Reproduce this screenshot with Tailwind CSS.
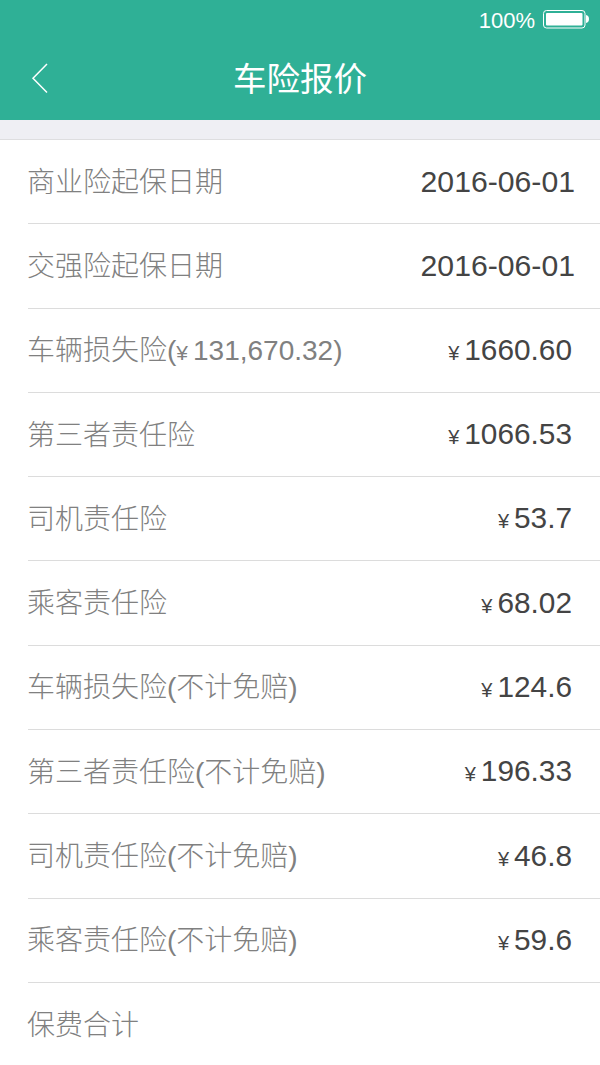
<!DOCTYPE html>
<html lang="zh-CN">
<head>
  <meta charset="UTF-8" />
  <title>车险报价</title>
  <script src="https://cdn.jsdelivr.net/npm/@tailwindcss/browser@4"></script>
</head>
<body class="w-[600px] h-[1065px] overflow-hidden bg-white font-['Liberation_Sans','Noto_Sans_CJK_SC',sans-serif]">
  <!-- Header -->
  <header class="h-[120px] bg-[#2fb096] text-white flex flex-col">
    <div class="h-10 flex items-center justify-end pr-[10px] gap-2">
      <span class="text-[22px]">100%</span>
      <svg width="47" height="20" viewBox="0 0 47 20">
        <rect x="0.500" y="0.500" width="41.500" height="17.500" rx="3" fill="none" stroke="#fff" stroke-width="1" />
        <rect x="3" y="3" width="36.500" height="12.500" rx="1" fill="#fff" />
        <path d="M43 5c2 .3 3 2 3 4s-1 3.700-3 4z" fill="#fff" />
      </svg>
    </div>
    <div class="relative flex-1 flex items-center justify-center pb-[6px]">
      <svg class="absolute left-[31px] top-[23px]" width="18" height="31" viewBox="0 0 18 31">
        <path d="M16 1 2 15.300l14 14.200" fill="none" stroke="#fff" stroke-width="1.500" />
      </svg>
      <h1 class="text-[33.500px] font-['Noto_Sans_CJK_SC',sans-serif]">车险报价</h1>
    </div>
  </header>
  <div class="h-5 bg-[#efeff4] border-b border-[#dedee0]"></div>

  <!-- Rows -->
  <ul class="pl-7 text-[28px] text-[#808080]">
    <li class="h-[84.300px] flex items-center justify-between pr-[25px] border-b border-[#dcdcdc]">
      <span class="font-light -ml-px pt-[2px]">商业险起保日期</span><span class="text-[30.200px] text-[#444]">2016-06-01</span>
    </li>
    <li class="h-[84.300px] flex items-center justify-between pr-[25px] border-b border-[#dcdcdc]">
      <span class="font-light -ml-px pt-[2px]">交强险起保日期</span><span class="text-[30.200px] text-[#444]">2016-06-01</span>
    </li>
    <li class="h-[84.300px] flex items-center justify-between pr-[28px] border-b border-[#dcdcdc]">
      <span class="font-light -ml-px pt-[2px]">车辆损失险(<span class="text-[21px] mr-[5px]">¥</span>131,670.32)</span><span class="text-[29.800px] text-[#444]"><span class="text-[20px] mr-[5px]">¥</span>1660.60</span>
    </li>
    <li class="h-[84.300px] flex items-center justify-between pr-[28px] border-b border-[#dcdcdc]">
      <span class="font-light -ml-px pt-[2px]">第三者责任险</span><span class="text-[29.800px] text-[#444]"><span class="text-[20px] mr-[5px]">¥</span>1066.53</span>
    </li>
    <li class="h-[84.300px] flex items-center justify-between pr-[28px] border-b border-[#dcdcdc]">
      <span class="font-light -ml-px pt-[2px]">司机责任险</span><span class="text-[29.800px] text-[#444]"><span class="text-[20px] mr-[5px]">¥</span>53.7</span>
    </li>
    <li class="h-[84.300px] flex items-center justify-between pr-[28px] border-b border-[#dcdcdc]">
      <span class="font-light -ml-px pt-[2px]">乘客责任险</span><span class="text-[29.800px] text-[#444]"><span class="text-[20px] mr-[5px]">¥</span>68.02</span>
    </li>
    <li class="h-[84.300px] flex items-center justify-between pr-[28px] border-b border-[#dcdcdc]">
      <span class="font-light -ml-px pt-[2px]">车辆损失险(不计免赔)</span><span class="text-[29.800px] text-[#444]"><span class="text-[20px] mr-[5px]">¥</span>124.6</span>
    </li>
    <li class="h-[84.300px] flex items-center justify-between pr-[28px] border-b border-[#dcdcdc]">
      <span class="font-light -ml-px pt-[2px]">第三者责任险(不计免赔)</span><span class="text-[29.800px] text-[#444]"><span class="text-[20px] mr-[5px]">¥</span>196.33</span>
    </li>
    <li class="h-[84.300px] flex items-center justify-between pr-[28px] border-b border-[#dcdcdc]">
      <span class="font-light -ml-px pt-[2px]">司机责任险(不计免赔)</span><span class="text-[29.800px] text-[#444]"><span class="text-[20px] mr-[5px]">¥</span>46.8</span>
    </li>
    <li class="h-[84.300px] flex items-center justify-between pr-[28px] border-b border-[#dcdcdc]">
      <span class="font-light -ml-px pt-[2px]">乘客责任险(不计免赔)</span><span class="text-[29.800px] text-[#444]"><span class="text-[20px] mr-[5px]">¥</span>59.6</span>
    </li>
    <li class="h-[84.300px] flex items-center justify-between pr-[28px]">
      <span class="font-light -ml-px pt-[2px]">保费合计</span>
    </li>
  </ul>
</body>
</html>
